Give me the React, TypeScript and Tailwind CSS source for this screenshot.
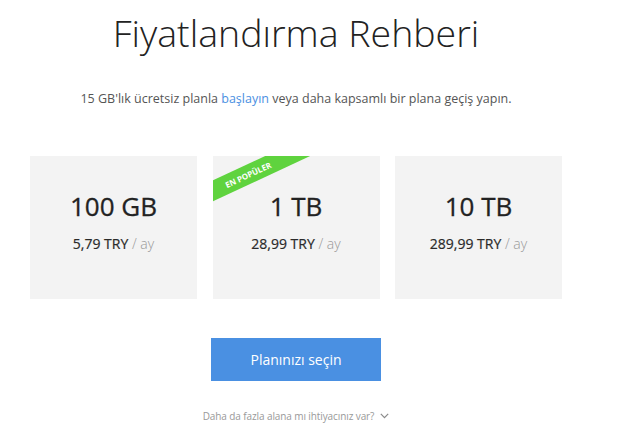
const plans = [
  { size: "100 GB", price: "5,79 TRY", popular: false },
  { size: "1 TB", price: "28,99 TRY", popular: true },
  { size: "10 TB", price: "289,99 TRY", popular: false },
];

export default function App() {
  return (
    <div
      className="w-[620px] h-[436px] bg-white overflow-hidden"
      style={{ fontFamily: '"Open Sans", "Liberation Sans", sans-serif' }}
    >
      <div className="ml-[30px] w-[532px] flex flex-col items-center">
        {/* Title */}
        <h1 className="mt-[14px] text-[37.5px] leading-[37px] font-light text-[#222]">
          Fiyatlandırma Rehberi
        </h1>

        <p className="mt-[38px] text-[12.5px] leading-[20px] text-[#555]">
          15 GB'lık ücretsiz planla{" "}
          <a className="text-[#4a90e2]" href="#">
            başlayın
          </a>{" "}
          veya daha kapsamlı bir plana geçiş yapın.
        </p>

        {/* Plans */}
        <div className="mt-[47px] w-full grid grid-cols-3 gap-[15.5px]">
          {plans.map((p) => (
            <div
              key={p.size}
              className="relative h-[143px] bg-[#f3f3f3] overflow-hidden flex flex-col items-center"
            >
              {p.popular && (
                <div className="absolute left-[-45px] top-[9px] w-[160px] h-[19px] bg-[#5fd33e] -rotate-[25deg] flex items-center justify-center">
                  <span className="text-[8px] font-bold text-white uppercase">
                    En Popüler
                  </span>
                </div>
              )}
              <div className="mt-[37px] text-[26px] leading-[26px] text-[#222] [-webkit-text-stroke:0.3px_#222]">
                {p.size}
              </div>
              <div className="mt-[14.5px] text-[14px] leading-[20px]">
                <span className="text-[#2a2a2a] [-webkit-text-stroke:0.2px_#2a2a2a]">{p.price}</span>
                <span className="font-light text-[#999]"> / ay</span>
              </div>
            </div>
          ))}
        </div>

        {/* Action */}
        <button className="mt-[39px] w-[170px] h-[43px] bg-[#4a90e2] text-white text-[14px] leading-[20px]">
          Planınızı seçin
        </button>

        <div className="mt-[27px] flex items-center gap-[6px] text-[10px] leading-[16px] tracking-[-0.1px] text-[#999]">
          <span>Daha da fazla alana mı ihtiyacınız var?</span>
          <svg width="9" height="6" viewBox="0 0 9 6" fill="none">
            <path d="M0.8 0.8 L4.5 4.6 L8.2 0.8" stroke="#8a8a8a" strokeWidth="1.2" />
          </svg>
        </div>
      </div>
    </div>
  );
}
